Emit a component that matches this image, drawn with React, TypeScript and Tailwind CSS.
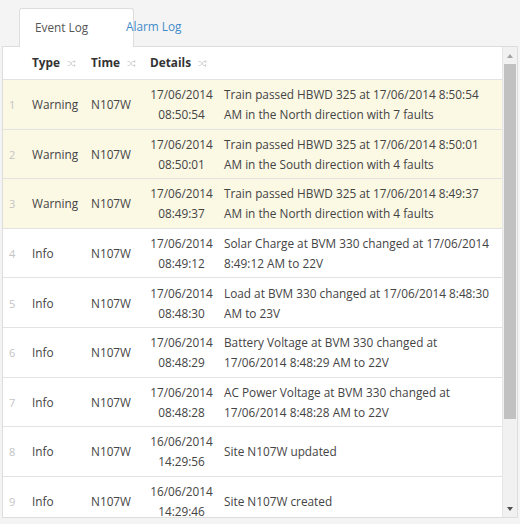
import React from "react";

interface LogRow {
  type: "Warning" | "Info";
  time: string;
  date: string;
  clock: string;
  details: string[];
}

const rows: LogRow[] = [
  {
    type: "Warning",
    time: "N107W",
    date: "17/06/2014",
    clock: "08:50:54",
    details: [
      "Train passed HBWD 325 at 17/06/2014 8:50:54",
      "AM in the North direction with 7 faults",
    ],
  },
  {
    type: "Warning",
    time: "N107W",
    date: "17/06/2014",
    clock: "08:50:01",
    details: [
      "Train passed HBWD 325 at 17/06/2014 8:50:01",
      "AM in the South direction with 4 faults",
    ],
  },
  {
    type: "Warning",
    time: "N107W",
    date: "17/06/2014",
    clock: "08:49:37",
    details: [
      "Train passed HBWD 325 at 17/06/2014 8:49:37",
      "AM in the North direction with 4 faults",
    ],
  },
  {
    type: "Info",
    time: "N107W",
    date: "17/06/2014",
    clock: "08:49:12",
    details: ["Solar Charge at BVM 330 changed at 17/06/2014", "8:49:12 AM to 22V"],
  },
  {
    type: "Info",
    time: "N107W",
    date: "17/06/2014",
    clock: "08:48:30",
    details: ["Load at BVM 330 changed at 17/06/2014 8:48:30", "AM to 23V"],
  },
  {
    type: "Info",
    time: "N107W",
    date: "17/06/2014",
    clock: "08:48:29",
    details: ["Battery Voltage at BVM 330 changed at", "17/06/2014 8:48:29 AM to 22V"],
  },
  {
    type: "Info",
    time: "N107W",
    date: "17/06/2014",
    clock: "08:48:28",
    details: ["AC Power Voltage at BVM 330 changed at", "17/06/2014 8:48:28 AM to 22V"],
  },
  {
    type: "Info",
    time: "N107W",
    date: "16/06/2014",
    clock: "14:29:56",
    details: ["Site N107W updated"],
  },
  {
    type: "Info",
    time: "N107W",
    date: "16/06/2014",
    clock: "14:29:46",
    details: ["Site N107W created"],
  },
];

const cols = "grid grid-cols-[22px_59px_59px_77px_1fr]";

function SortIcon() {
  return (
    <svg width="9" height="7" viewBox="0 0 9 7" className="ml-[7px] mt-[1px]">
      <path
        d="M0.5 1.5h2l3 4h2.5M0.5 5.5h2l3-4h2.5M7 0.3l1.3 1.2L7 2.7M7 4.3l1.3 1.2L7 6.7"
        fill="none"
        stroke="#d4d4d4"
        strokeWidth="1"
      />
    </svg>
  );
}

function Scrollbar() {
  return (
    <div className="w-[15px] flex flex-col bg-[#f1f1f1] border-l border-[#e6e6e6]">
      <div className="h-[17px] flex items-center justify-center">
        <div className="w-0 h-0 border-l-[3.5px] border-r-[3.5px] border-b-[4px] border-l-transparent border-r-transparent border-b-[#a3a3a3]" />
      </div>
      <div className="h-[355px] mx-[1px] bg-[#c1c1c1]" />
      <div className="flex-1" />
      <div className="h-[17px] flex items-center justify-center">
        <div className="w-0 h-0 border-l-[3.5px] border-r-[3.5px] border-t-[4px] border-l-transparent border-r-transparent border-t-[#505050]" />
      </div>
    </div>
  );
}

export default function App() {
  return (
    <div
      className="w-[520px] h-[524px] bg-[#f4f4f4] text-[11.8px] text-[#333] overflow-hidden"
      style={{ fontFamily: '"Open Sans", "Noto Sans", sans-serif' }}
    >
      <div className="h-[47px] flex items-end pl-[17px] mx-[2px] border-b border-[#dddddd]">
        <div className="h-[39px] w-[115px] mb-[-1px] bg-white border border-b-0 border-[#dddddd] rounded-t-[3px] flex items-center pl-[15px] text-[#555]">
          Event Log
        </div>
        <div className="h-[39px] flex items-center ml-[-8px] text-[#428bca]">
          Alarm Log
        </div>
      </div>

      <div className="ml-[2px] w-[516px] h-[471px] bg-white border border-t-0 border-[#dddddd] flex overflow-hidden">
        <div className="flex-1 flex flex-col">
          <div className={`${cols} shrink-0 h-[33px] border-b border-[#e3e3e3] font-bold items-center`}>
            <div />
            <div className="flex items-center pl-[7px]">
              Type
              <SortIcon />
            </div>
            <div className="flex items-center pl-[7px]">
              Time
              <SortIcon />
            </div>
            <div className="col-span-2 flex items-center pl-[7px]">
              Details
              <SortIcon />
            </div>
          </div>

          {rows.map((row, i) => (
            <div
              key={i}
              className={`${cols} shrink-0 h-[49.6px] border-b border-[#e3e3e3] items-center leading-[20px] ${
                row.type === "Warning" ? "bg-[#fbf8e4]" : "bg-white"
              }`}
            >
              <div className="text-[11px] text-[#c4c4c4] pl-[6px] mt-[2px]">{i + 1}</div>
              <div className="pl-[7px] text-[#444]">{row.type}</div>
              <div className="pl-[7px] text-[#444]">{row.time}</div>
              <div className="text-center text-[#444]">
                <div>{row.date}</div>
                <div>{row.clock}</div>
              </div>
              <div className="pl-[4px] text-[#444] whitespace-nowrap">
                {row.details.map((line, j) => (
                  <div key={j}>{line}</div>
                ))}
              </div>
            </div>
          ))}
        </div>
        <Scrollbar />
      </div>
    </div>
  );
}
